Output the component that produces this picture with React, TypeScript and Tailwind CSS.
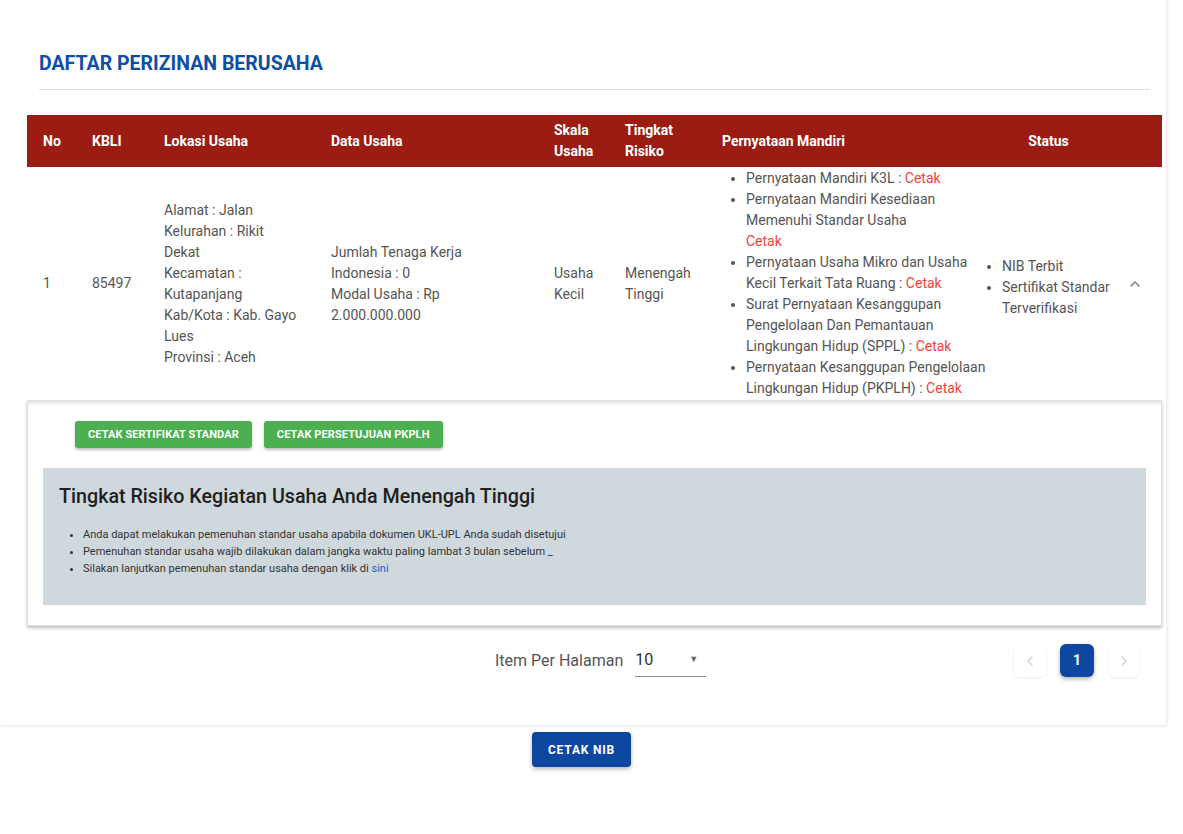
import React from "react";
import { ChevronUp, ChevronLeft, ChevronRight } from "lucide-react";

const pernyataan = [
  { text: "Pernyataan Mandiri K3L : ", link: "Cetak" },
  { text: "Pernyataan Mandiri Kesediaan Memenuhi Standar Usaha", link: "Cetak", br: true },
  { text: "Pernyataan Usaha Mikro dan Usaha Kecil Terkait Tata Ruang : ", link: "Cetak" },
  { text: "Surat Pernyataan Kesanggupan Pengelolaan Dan Pemantauan Lingkungan Hidup (SPPL) : ", link: "Cetak" },
  { text: "Pernyataan Kesanggupan Pengelolaan Lingkungan Hidup (PKPLH) : ", link: "Cetak" },
];

export default function App() {
  return (
    <div className="min-h-[834px] bg-white font-[Roboto,'Liberation_Sans',sans-serif]">
      {/* main card */}
      <div className="w-[1166px] pt-[53px] pb-[48px] shadow-[0_0_4px_rgba(0,0,0,0.18)]">
        <h1 className="pl-[39px] text-[19.5px] leading-[22px] font-bold text-[#0d4ea6]">
          DAFTAR PERIZINAN BERUSAHA
        </h1>
        <div className="ml-[39px] mr-[16px] mt-[14px] h-px bg-[#dedede]" />

        {/* table */}
        <table className="ml-[27px] mt-[25px] w-[1135px] table-fixed border-collapse text-[14px] leading-[21px]">
          <colgroup>
            <col className="w-[49px]" />
            <col className="w-[72px]" />
            <col className="w-[167px]" />
            <col className="w-[223px]" />
            <col className="w-[71px]" />
            <col className="w-[97px]" />
            <col className="w-[284px]" />
            <col className="w-[125px]" />
            <col className="w-[47px]" />
          </colgroup>
          <thead>
            <tr className="h-[52px] bg-[#9b1c13] text-left font-bold text-white">
              <th className="pl-4">No</th>
              <th className="pl-4">KBLI</th>
              <th className="pl-4">Lokasi Usaha</th>
              <th className="pl-4">Data Usaha</th>
              <th className="pl-4 pr-2">Skala Usaha</th>
              <th className="pl-4 pr-2">Tingkat Risiko</th>
              <th className="pl-4">Pernyataan Mandiri</th>
              <th className="pr-2 text-center">Status</th>
              <th />
            </tr>
          </thead>
          <tbody className="text-[#555]">
            <tr className="h-[233px] align-middle">
              <td className="pl-4">1</td>
              <td className="pl-4">85497</td>
              <td className="pl-4 pr-4">
                <div>Alamat : Jalan</div>
                <div>Kelurahan : Rikit Dekat</div>
                <div>Kecamatan : Kutapanjang</div>
                <div>Kab/Kota : Kab. Gayo Lues</div>
                <div>Provinsi : Aceh</div>
              </td>
              <td className="pl-4 pr-[42px]">
                <div>Jumlah Tenaga Kerja Indonesia : 0</div>
                <div>Modal Usaha : Rp 2.000.000.000</div>
              </td>
              <td className="pl-4 pr-4">Usaha Kecil</td>
              <td className="pl-4 pr-2">Menengah Tinggi</td>
              <td className="py-px pl-4">
                <ul className="list-disc pl-6">
                  {pernyataan.map((p, i) => (
                    <li key={i}>
                      {p.text}
                      {p.br && <br />}
                      <span className="text-[#f44336]">{p.link}</span>
                    </li>
                  ))}
                </ul>
              </td>
              <td className="pl-3 pt-2">
                <ul className="list-disc">
                  <li>NIB Terbit</li>
                  <li>Sertifikat Standar Terverifikasi</li>
                </ul>
              </td>
              <td className="pl-[12px]">
                <ChevronUp size={16} strokeWidth={2} className="text-[#777]" />
              </td>
            </tr>
            <tr>
              <td colSpan={9} className="p-0">
                {/* expanded content */}
                <div className="h-[226px] border border-[#e2e2e2] pt-[20px] shadow-[inset_0_3px_4px_-2px_rgba(0,0,0,0.18),0_2px_3px_rgba(0,0,0,0.25)]">
                  <div className="ml-[47px] flex gap-3">
                    <button className="h-[27px] rounded-[3px] bg-[#4caf50] px-[13px] text-[11px] font-bold tracking-[0.1px] text-white shadow-[0_2px_3px_rgba(0,0,0,0.25)]">
                      CETAK SERTIFIKAT STANDAR
                    </button>
                    <button className="h-[27px] rounded-[3px] bg-[#4caf50] px-[13px] text-[11px] font-bold tracking-[0.1px] text-white shadow-[0_2px_3px_rgba(0,0,0,0.25)]">
                      CETAK PERSETUJUAN PKPLH
                    </button>
                  </div>
                  <div className="mx-[15px] mt-[20px] h-[137px] bg-[#cfd8dc] px-4 pt-[13px]">
                    <h2 className="text-[19.7px] leading-[32px] font-medium text-[#1f1f1f]">
                      Tingkat Risiko Kegiatan Usaha Anda Menengah Tinggi
                    </h2>
                    <ul className="mt-[13px] list-disc pl-6 text-[11px] leading-[17px] text-[#333]">
                      <li>Anda dapat melakukan pemenuhan standar usaha apabila dokumen UKL-UPL Anda sudah disetujui</li>
                      <li>Pemenuhan standar usaha wajib dilakukan dalam jangka waktu paling lambat 3 bulan sebelum _</li>
                      <li>
                        Silakan lanjutkan pemenuhan standar usaha dengan klik di{" "}
                        <span className="text-[#1565c0]">sini</span>
                      </li>
                    </ul>
                  </div>
                </div>
              </td>
            </tr>
          </tbody>
        </table>

        {/* pagination */}
        <div className="ml-[27px] mt-[18px] flex h-[33px] w-[1135px] items-center">
          <div className="ml-[468px] flex items-center">
            <span className="text-[16px] text-[#555]">Item Per Halaman</span>
            <div className="ml-[12px] flex h-[33px] w-[71px] items-center justify-between border-b border-[#888] pr-[8px] text-[16px] text-[#333]">
              <span>10</span>
              <span className="text-[9px] text-[#666]">▼</span>
            </div>
          </div>
          <div className="flex-1" />
          <div className="mr-[22px] flex items-center gap-[14px]">
            <div className="flex h-[32px] w-[32px] items-center justify-center rounded-md bg-white shadow-[0_1px_3px_rgba(0,0,0,0.08)]">
              <ChevronLeft size={16} className="text-[#d0d0d0]" />
            </div>
            <div className="flex h-[33px] w-[34px] items-center justify-center rounded-md bg-[#0d47a1] text-[14px] font-bold text-white shadow-[0_2px_4px_rgba(0,0,0,0.3)]">
              1
            </div>
            <div className="flex h-[32px] w-[32px] items-center justify-center rounded-md bg-white shadow-[0_1px_3px_rgba(0,0,0,0.08)]">
              <ChevronRight size={16} className="text-[#d0d0d0]" />
            </div>
          </div>
        </div>
      </div>

      {/* cetak nib */}
      <div className="mt-[7px] flex w-[1166px] justify-center">
        <button className="-ml-[3px] h-[35px] w-[99px] rounded bg-[#0d47a1] text-[12px] font-bold tracking-[0.8px] text-white shadow-[0_2px_4px_rgba(0,0,0,0.3)]">
          CETAK NIB
        </button>
      </div>
    </div>
  );
}
